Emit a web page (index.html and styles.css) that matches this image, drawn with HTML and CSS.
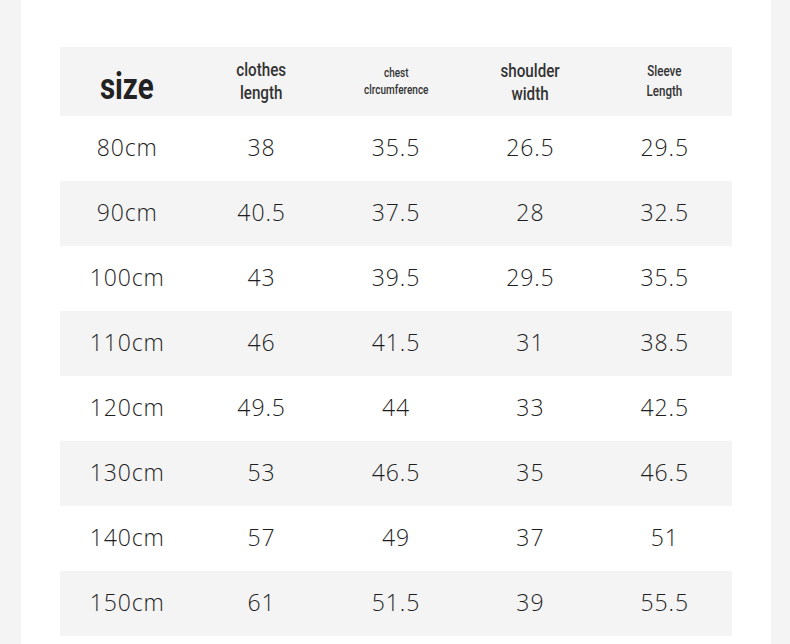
FILE: index.html
```html
<!DOCTYPE html>
<html>
<head>
<meta charset="utf-8">
<link rel="stylesheet" href="styles.css">
</head>
<body>
<div class="panel">
  <div class="table">
    <div class="row head">
      <div class="cell"><span class="size">size</span></div>
      <div class="cell"><span class="h h-lg">clothes<br>length</span></div>
      <div class="cell"><span class="h h-sm">chest<br>clrcumference</span></div>
      <div class="cell"><span class="h h-lg h-up">shoulder<br>width</span></div>
      <div class="cell"><span class="h h-md">Sleeve<br>Length</span></div>
    </div>
    <div class="row"><div class="cell">80cm</div><div class="cell">38</div><div class="cell">35.5</div><div class="cell">26.5</div><div class="cell">29.5</div></div>
    <div class="row alt"><div class="cell">90cm</div><div class="cell">40.5</div><div class="cell">37.5</div><div class="cell">28</div><div class="cell">32.5</div></div>
    <div class="row"><div class="cell">100cm</div><div class="cell">43</div><div class="cell">39.5</div><div class="cell">29.5</div><div class="cell">35.5</div></div>
    <div class="row alt"><div class="cell">110cm</div><div class="cell">46</div><div class="cell">41.5</div><div class="cell">31</div><div class="cell">38.5</div></div>
    <div class="row"><div class="cell">120cm</div><div class="cell">49.5</div><div class="cell">44</div><div class="cell">33</div><div class="cell">42.5</div></div>
    <div class="row alt"><div class="cell">130cm</div><div class="cell">53</div><div class="cell">46.5</div><div class="cell">35</div><div class="cell">46.5</div></div>
    <div class="row"><div class="cell">140cm</div><div class="cell">57</div><div class="cell">49</div><div class="cell">37</div><div class="cell">51</div></div>
    <div class="row alt"><div class="cell">150cm</div><div class="cell">61</div><div class="cell">51.5</div><div class="cell">39</div><div class="cell">55.5</div></div>
  </div>
</div>
</body>
</html>
```
FILE: styles.css
```css
html, body {
  margin: 0;
  padding: 0;
}
body {
  background: #f4f4f4;
  width: 790px;
  height: 644px;
  overflow: hidden;
}
.panel {
  background: #ffffff;
  margin: 0 19px 0 21px;
  height: 644px;
  padding-top: 47px;
  box-sizing: border-box;
}
.table {
  margin-left: 39px;
  width: 672px;
}
.row {
  display: grid;
  grid-template-columns: repeat(5, 1fr);
  height: 65px;
}
.row.head {
  height: 69px;
  background: #f4f4f4;
}
.row.alt {
  background: #f4f4f4;
}
.cell {
  display: flex;
  align-items: center;
  justify-content: center;
  padding-bottom: 3px;
  font-family: "Open Sans", "DejaVu Sans", sans-serif;
  font-weight: 300;
  font-size: 23px;
  color: #1e1e1e;
  letter-spacing: 0.9px;
}
.head .cell {
  padding-bottom: 0;
}
.size {
  font-family: Roboto, "Liberation Sans", sans-serif;
  font-weight: 700;
  font-size: 36px;
  color: #222;
  display: inline-block;
  transform: scaleX(0.82);
  margin-top: 10px;
  letter-spacing: 0;
}
.h {
  font-family: Roboto, "Liberation Sans", sans-serif;
  font-weight: 500;
  color: #333;
  text-align: center;
  display: inline-block;
  transform: scaleX(0.8);
  letter-spacing: 0;
}
.h-lg {
  font-size: 19px;
  line-height: 23px;
  margin-top: -2px;
}
.h-up {
  margin-top: 1px;
}
.h-md {
  font-size: 14.5px;
  line-height: 20px;
}
.h-sm {
  font-size: 12.5px;
  line-height: 17px;
  margin-top: -1px;
}
```
